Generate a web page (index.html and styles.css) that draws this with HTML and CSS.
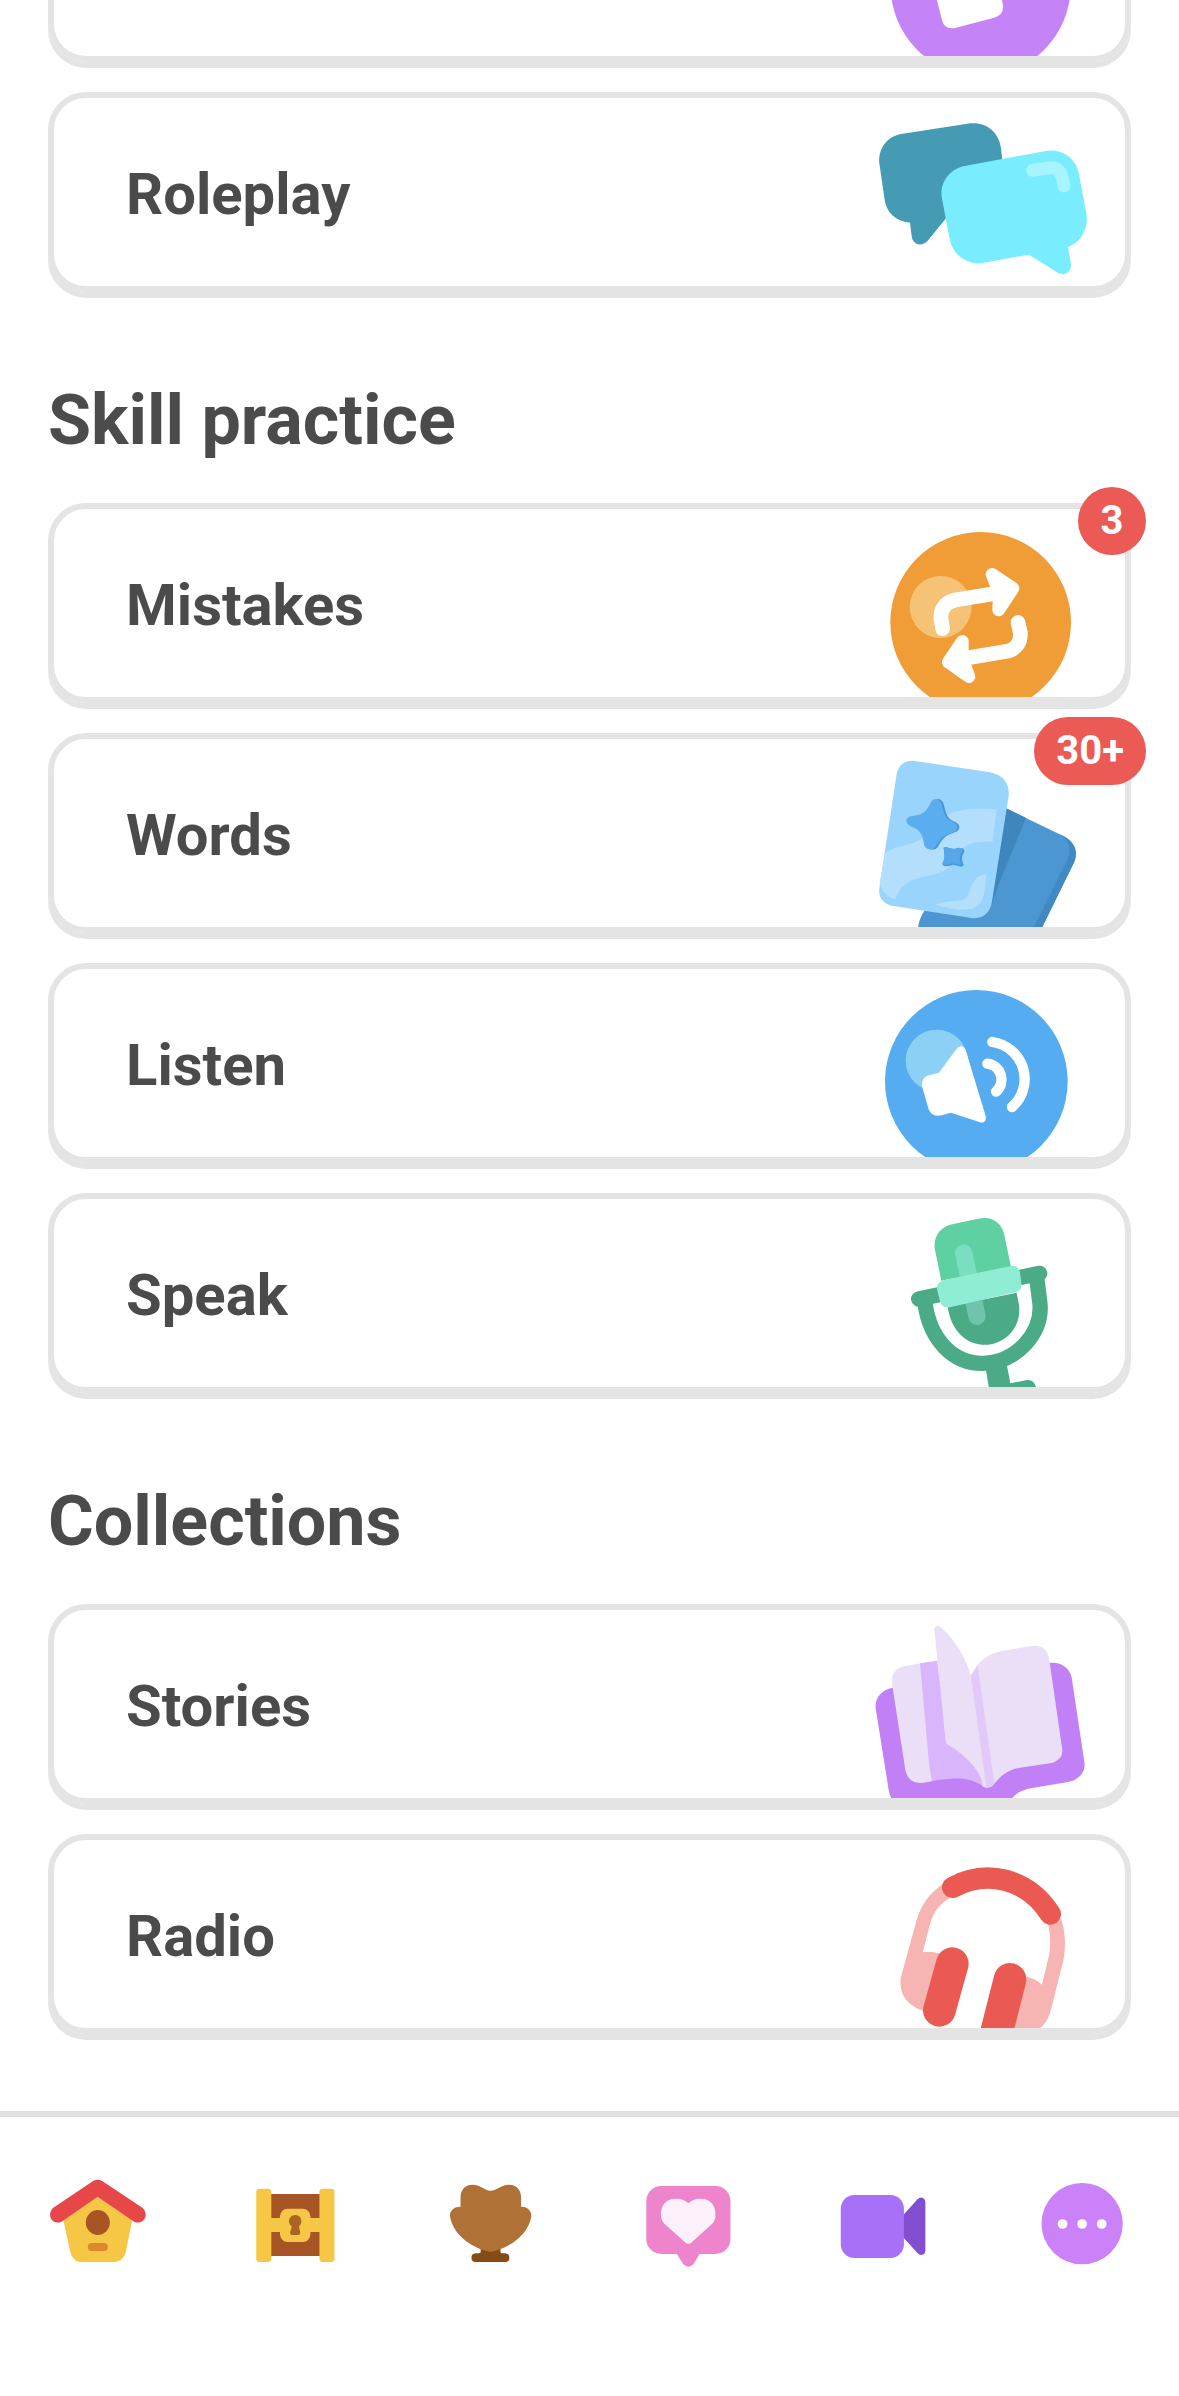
FILE: index.html
```html
<!DOCTYPE html>
<html lang="en">
<head>
    <meta charset="UTF-8">
    <meta name="viewport" content="width=device-width, initial-scale=1.0">
    <title>Practice</title>
    <link rel="stylesheet" href="styles.css">
</head>
<body>
    <main class="content">
        <ul class="card-list">
            <li class="card-item">
                <a href="#" class="card card-cut">
                    <svg class="card-art" viewBox="87 0 768 168">
                        <circle cx="422" cy="-42" r="270" fill="#c484f7"/>
                        <path d="M288-10L306 60Q314 92 348 83L463 53Q492 43 489 16L484-10Z" fill="#fff"/>
                    </svg>
                </a>
            </li>
            <li class="card-item">
                <a href="#" class="card">
                    <span class="card-title">Roleplay</span>
                    <svg class="card-art" viewBox="87 294 768 564">
                        <path d="M118 490C114 445 142 407 188 401L392 370C440 366 478 398 483 445L487 480L400 560L318 655L265 720C248 742 218 736 215 708L210 668C165 664 139 635 134 600Z" fill="#459bb3"/>
                        <path d="M378 497L622 452C668 446 708 476 716 518L740 645C745 690 720 730 684 741L693 793C694 815 675 828 655 819L567 764L432 788C380 796 338 765 329 718L305 590C300 545 330 505 378 497Z" fill="#79edfe"/>
                        <path d="M578 511L630 503Q662 501 668 538L672 558" fill="none" stroke="#a5f4fe" stroke-width="39" stroke-linecap="round"/>
                    </svg>
                </a>
            </li>
        </ul>

        <h2 class="section-title">Skill practice</h2>
        <ul class="card-list">
            <li class="card-item">
                <a href="#" class="card">
                    <span class="card-title">Mistakes</span>
                    <svg class="card-art" viewBox="87 87 768 564">
                        <circle cx="422" cy="427" r="271" fill="#f09c37"/>
                        <circle cx="302" cy="381" r="93" fill="#f5c276"/>
                        <g fill="none" stroke="#fff" stroke-linecap="round" stroke-linejoin="round">
                            <path d="M308 446L303 418C299 385 320 366 345 360L470 340" stroke-width="44"/>
                            <path d="M534 427L541 458C543 485 530 506 505 513L385 533" stroke-width="44"/>
                            <path d="M456 283L519 325L476 390L478 340Z" fill="#fff" stroke-width="38"/>
                            <path d="M367 484L325 546L387 590L367 536Z" fill="#fff" stroke-width="38"/>
                        </g>
                    </svg>
                </a>
                <span class="badge">3</span>
            </li>
            <li class="card-item">
                <a href="#" class="card">
                    <span class="card-title">Words</span>
                    <svg class="card-art" viewBox="87 87 768 564">
                        <path d="M498 295L670 378C705 395 715 425 703 455L605 655L234 655C237 630 245 615 255 600L450 580Z" fill="#4c97d1"/>
                        <path d="M498 295L557 323C530 400 485 490 455 585Z" fill="#3f86bd"/>
                        <path d="M660 373C705 395 715 425 703 455L605 655L580 655L682 450C695 420 692 395 660 373Z" fill="#4189c2"/>
                        <path d="M225 153L450 187C490 195 510 222 506 258L455 580C448 612 425 630 390 623L155 587C128 580 114 560 118 535L170 192C176 165 195 150 225 153Z" fill="#98d4fb"/>
                        <path d="M135 430C180 395 240 420 290 340C330 295 400 292 470 298L458 395C400 393 370 400 350 440C320 490 300 490 250 500C200 512 185 525 165 568C140 560 125 545 119 520Z" fill="#b3dffd"/>
                        <path d="M288 584C330 562 378 588 388 545C400 505 420 492 438 494C436 530 435 560 420 580C400 610 340 600 288 584Z" fill="#b3dffd"/>
                        <path d="M276 282C283 262 304 262 311 282C319 318 322 325 344 335C364 344 362 360 344 367C315 376 307 387 294 410C284 425 261 420 258 402C253 370 246 360 221 350C198 340 201 320 223 318C251 315 261 310 276 282Z" fill="#4595dc"/>
                        <path d="M270 282C277 262 298 262 305 282C313 318 316 325 338 335C358 344 356 360 338 367C309 376 301 387 288 408C278 424 255 420 252 402C247 370 240 360 215 350C192 340 195 320 217 318C245 315 255 310 270 282Z" fill="#5aadee"/>
                        <path d="M311 413C320 408 335 420 347 417C360 412 373 413 373 425C364 440 364 448 371 464C368 475 352 466 340 464C328 466 312 474 307 462C316 446 314 436 311 413Z" fill="#4595dc"/>
                        <path d="M311 413C320 408 332 418 343 416C356 411 369 412 367 423C358 438 357 446 364 461C361 470 346 461 336 460C324 463 311 471 307 460C316 446 314 436 311 413Z" fill="#55a7e9"/>
                    </svg>
                </a>
                <span class="badge">30+</span>
            </li>
            <li class="card-item">
                <a href="#" class="card">
                    <span class="card-title">Listen</span>
                    <svg class="card-art" viewBox="87 57 768 564">
                        <circle cx="409" cy="394" r="274" fill="#56acf1"/>
                        <circle cx="290" cy="332" r="93" fill="#8dd0f6"/>
                        <path d="M350 296C358 285 372 286 377 300L437 498C440 513 432 520 420 517L333 488L305 496C285 501 270 492 265 475L247 412C243 392 252 380 268 376L297 368Z" fill="#fff"/>
                        <g fill="none" stroke="#fff" stroke-width="31" stroke-linecap="round">
                            <path d="M457 276A112 112 0 0 1 516 471"/>
                            <path d="M442 341A48 48 0 0 1 468 425"/>
                        </g>
                    </svg>
                </a>
            </li>
            <li class="card-item">
                <a href="#" class="card">
                    <span class="card-title">Speak</span>
                    <svg class="card-art" viewBox="87 27 768 564">
                        <g fill="none" stroke="#4aab86" stroke-width="46" stroke-linecap="round">
                            <path d="M236 327L599 250"/>
                            <path d="M255 340C270 450 340 522 430 520C530 516 607 430 600 342L590 262" stroke-linecap="butt"/>
                        </g>
                        <path d="M437 535L500 522L511 580L562 570Q583 568 589 595L447 595Z" fill="#4aab86"/>
                        <path d="M340 102L415 86C460 77 487 103 493 135L513 230L304 272L284 175C280 135 305 108 340 102Z" fill="#5ed0a1"/>
                        <path d="M323 350L530 308L537 345C545 410 500 458 445 464C385 468 335 430 323 350Z" fill="#4aab86"/>
                        <path d="M371 189L388 270" stroke="#79dfc0" stroke-width="52" stroke-linecap="round"/>
                        <path d="M401 330L411 379" stroke="#6fc5ab" stroke-width="52" stroke-linecap="round"/>
                        <path d="M318 269L512 228C528 225 537 232 540 248L544 280C546 295 540 303 528 306L330 352C315 355 304 348 300 334L291 298C289 282 300 272 318 269Z" fill="#8eedd2"/>
                    </svg>
                </a>
            </li>
        </ul>

        <h2 class="section-title">Collections</h2>
        <ul class="card-list">
            <li class="card-item">
                <a href="#" class="card">
                    <span class="card-title">Stories</span>
                    <svg class="card-art" viewBox="87 60 768 564">
                        <path d="M158 293C122 300 104 325 107 355L146 600Q148 616 155 626L515 626C535 602 560 596 590 592L680 577C720 570 738 545 733 515L695 262C688 232 662 215 628 219L400 260Z" fill="#c180f6"/>
                        <path d="M242 220L194 228C165 234 153 255 156 280L196 540C203 570 222 582 250 578L277 574Z" fill="#ebdef7"/>
                        <path d="M240 220L292 212L320 455L430 500L432 590C385 560 350 562 276 573L268 530Z" fill="#d9b5fb"/>
                        <path d="M393 255C415 210 450 187 490 182L575 168C605 164 625 180 628 210L667 480C668 500 655 515 630 520L540 533C500 540 480 560 460 585C450 596 437 595 428 588Z" fill="#ebdef7"/>
                        <path d="M393 258L413 228L463 580Q448 597 432 592Z" fill="#e1c9f9"/>
                        <path d="M283 120C284 106 294 106 303 112C350 155 380 210 393 258L439 592L427 588C428 545 370 490 325 465C317 462 317 455 316 445Z" fill="#ebdef7"/>
                    </svg>
                </a>
            </li>
            <li class="card-item">
                <a href="#" class="card">
                    <span class="card-title">Radio</span>
                    <svg class="card-art" viewBox="87 30 768 564">
                        <path d="M230 270C245 220 270 190 312 160L335 200C300 220 280 245 270 283L248 367Q275 362 300 372L260 545C200 530 175 490 183 440Z" fill="#f6b4b3"/>
                        <path d="M661 262C677 300 678 350 670 392L630 550Q620 580 598 596L515 596L560 441Q585 445 606 464L628 372C632 340 632 310 622 275Z" fill="#f6b4b3"/>
                        <g fill="none" stroke="#eb5a52" stroke-linecap="round">
                            <path d="M338 172C440 117 563 145 631 252" stroke-width="64"/>
                            <path d="M337 401L298 541M510 448L465 625" stroke-width="98"/>
                        </g>
                    </svg>
                </a>
            </li>
        </ul>
    </main>

    <nav class="tab-bar">
        <a href="#" class="tab" aria-label="Home">
            <svg viewBox="128 252 266 300" preserveAspectRatio="none">
                <path d="M260 318L352 390L336 480C332 505 320 516 302 516L219 516C200 516 190 502 186 480L169 390Z" fill="#f5c744"/>
                <path d="M248 273Q260 265 272 273L380 354C398 375 382 405 358 396L260 320L163 396C138 405 124 375 141 354Z" fill="#e8474a"/>
                <ellipse cx="260.500" cy="397.500" rx="32" ry="37.500" fill="#a85526"/>
                <rect x="234" y="459" width="53" height="24" rx="11" fill="#dc882e"/>
            </svg>
        </a>
        <a href="#" class="tab" aria-label="Chest">
            <svg viewBox="650 252 266 300" preserveAspectRatio="none">
                <rect x="712" y="312" width="144" height="186" fill="#a85526"/>
                <rect x="712" y="384" width="144" height="42" fill="#f5c744"/>
                <rect x="680" y="296" width="40" height="220" rx="9" fill="#f5c744"/>
                <rect x="848" y="296" width="40" height="220" rx="9" fill="#f5c744"/>
                <rect x="743" y="356" width="81" height="100" rx="20" ry="23" fill="#f5c744"/>
                <path d="M784 375C794 375 800 384 800 394C800 401 797 406 794 409C793 415 797 421 797 427Q798 435 790 435L777 435Q769 435 770 427C771 421 775 415 774 409C770 406 767 401 767 394C767 384 774 375 784 375Z" fill="#aa6423"/>
            </svg>
        </a>
        <a href="#" class="tab" aria-label="Leagues">
            <svg viewBox="1173 252 266 300" preserveAspectRatio="none">
                <path d="M1278 475L1332 475Q1329 490 1335 490L1344 490Q1355 491 1355 503Q1355 516 1344 516L1265 516Q1254 516 1254 503Q1254 491 1265 490L1274 490Q1281 490 1278 475Z" fill="#854d15"/>
                <path d="M1225 322C1225 298 1238 284 1257 284C1280 284 1288 302 1305 302C1322 302 1332 284 1353 284C1373 284 1386 298 1386 322L1386 350C1403 350 1415 362 1413 380C1405 432 1362 468 1316 483Q1305 487 1294 483C1248 468 1206 432 1197 380C1195 362 1207 350 1225 350Z" fill="#b07136"/>
            </svg>
        </a>
        <a href="#" class="tab" aria-label="Feed">
            <svg viewBox="127 252 266 300" preserveAspectRatio="none">
                <rect x="149" y="288" width="224" height="204" rx="40" ry="45" fill="#ee84cb"/>
                <path d="M229 490L292 490L275 522Q261 538 247 522Z" fill="#ee84cb"/>
                <path d="M261 340C274 325 292 324 306 328C326 335 333 353 333 374C333 390 328 398 318 408L270 457Q261 466 252 457L204 408C194 398 188 390 188 374C188 353 195 335 215 328C230 324 248 325 261 340Z" fill="#fcf1fa"/>
            </svg>
        </a>
        <a href="#" class="tab" aria-label="Video call">
            <svg viewBox="649 252 266 300" preserveAspectRatio="none">
                <path d="M828 382L871 328Q879 319 887 325Q892 329 892 337L892 481Q892 490 887 493Q879 498 871 489L828 436Z" fill="#834ed0"/>
                <rect x="667" y="315" width="168" height="189" rx="36" ry="41" fill="#a771f7"/>
            </svg>
        </a>
        <a href="#" class="tab" aria-label="More">
            <svg viewBox="1171 252 266 300" preserveAspectRatio="none">
                <ellipse cx="1307" cy="401" rx="108" ry="122" fill="#cb82f9"/>
                <g fill="#fff">
                    <ellipse cx="1255" cy="402" rx="13" ry="14.500"/>
                    <ellipse cx="1307" cy="402" rx="13" ry="14.500"/>
                    <ellipse cx="1359" cy="402" rx="13" ry="14.500"/>
                </g>
            </svg>
        </a>
    </nav>
</body>
</html>
```
FILE: styles.css
```css
* {
    box-sizing: border-box;
}
body {
    margin: 0;
    min-height: 100vh;
    display: flex;
    flex-direction: column;
    font-family: Roboto, "Liberation Sans", sans-serif;
    font-weight: bold;
    color: #4b4b4b;
    background-color: #fff;
}
.content {
    flex: 1;
    padding: 0 48px 71px;
}
.section-title {
    margin: 82px 0 43px;
    font-size: 70px;
    line-height: 80px;
}
.card-list {
    margin: 0;
    padding: 0 0 6px;
    list-style: none;
    display: flex;
    flex-direction: column;
    gap: 30px;
}
.card-item {
    position: relative;
}
.card {
    display: flex;
    align-items: center;
    justify-content: space-between;
    padding-left: 72px;
    border: 6px solid #e4e4e4;
    border-radius: 38px;
    box-shadow: 0 6px 0 #e4e4e4;
    overflow: hidden;
    color: inherit;
    text-decoration: none;
}
/* scrolled part way under the top edge */
.card-cut {
    justify-content: flex-end;
    border-top: none;
    border-top-left-radius: 0;
    border-top-right-radius: 0;
}
.card-title {
    padding-top: 4px;
    font-size: 58px;
    line-height: 68px;
}
.card-art {
    display: block;
    width: 256px;
}
.badge {
    position: absolute;
    top: -16px;
    right: -15px;
    min-width: 68px;
    padding: 0 22px;
    border-radius: 34px;
    background-color: #eb5a54;
    color: #fff;
    font-size: 40px;
    line-height: 68px;
    text-align: center;
}
.tab-bar {
    display: grid;
    grid-template-columns: repeat(6, 1fr);
    padding: 57px 0 122px;
    border-top: 6px solid #e1e1e1;
}
.tab {
    display: flex;
    justify-content: center;
}
.tab svg {
    width: 100px;
    height: 100px;
}
```
